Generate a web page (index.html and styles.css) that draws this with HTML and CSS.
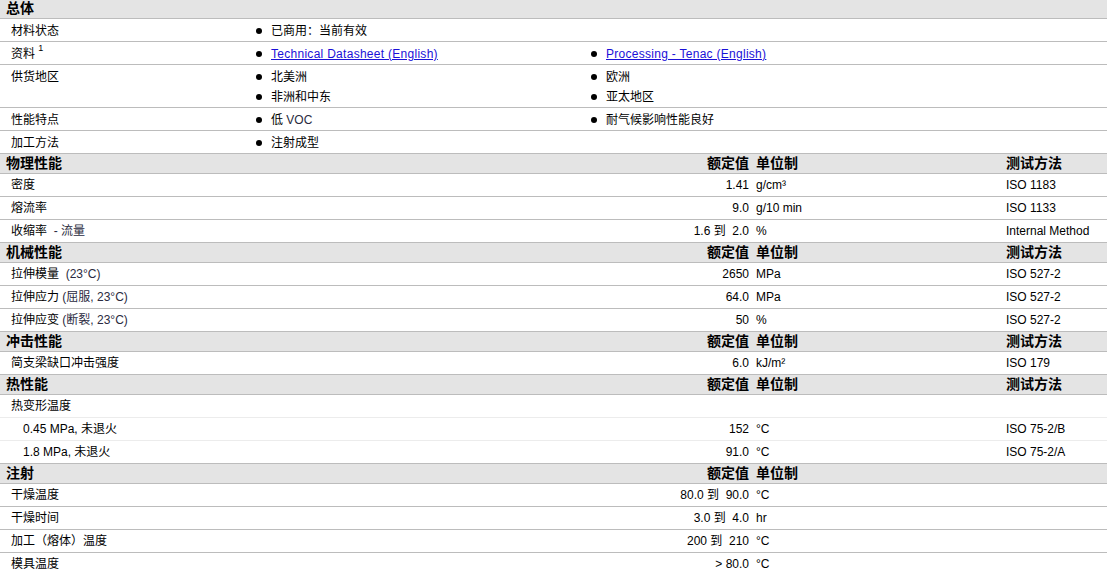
FILE: index.html
```html
<!DOCTYPE html>
<html lang="zh-CN">
<head>
<meta charset="utf-8">
<title>物性表</title>
<link rel="stylesheet" href="styles.css">
</head>
<body>
<div class="sheet">
  <div class="head"><div class="h-lbl">总体</div></div>
  <div class="grow">
    <div class="lbl">材料状态</div>
    <div class="col"><div class="item"><span class="dot"></span>已商用：当前有效</div></div>
    <div class="col"></div>
  </div>
  <div class="grow">
    <div class="lbl">资料 <sup class="note">1</sup></div>
    <div class="col"><div class="item"><span class="dot"></span><a href="#">Technical Datasheet (English)</a></div></div>
    <div class="col"><div class="item"><span class="dot"></span><a href="#">Processing - Tenac (English)</a></div></div>
  </div>
  <div class="grow">
    <div class="lbl">供货地区</div>
    <div class="col">
      <div class="item"><span class="dot"></span>北美洲</div>
      <div class="item"><span class="dot"></span>非洲和中东</div>
    </div>
    <div class="col">
      <div class="item"><span class="dot"></span>欧洲</div>
      <div class="item"><span class="dot"></span>亚太地区</div>
    </div>
  </div>
  <div class="grow">
    <div class="lbl">性能特点</div>
    <div class="col"><div class="item"><span class="dot"></span>低 <span class="dim">&nbsp;VOC</span></div></div>
    <div class="col"><div class="item"><span class="dot"></span>耐气候影响性能良好</div></div>
  </div>
  <div class="grow">
    <div class="lbl">加工方法</div>
    <div class="col"><div class="item"><span class="dot"></span>注射成型</div></div>
    <div class="col"></div>
  </div>

  <div class="head prow">
    <div class="h-lbl">物理性能</div><div class="val">额定值</div><div class="unit">单位制</div><div class="meth">测试方法</div>
  </div>
  <div class="prow row">
    <div class="lbl">密度</div><div class="val">1.41</div><div class="unit">g/cm³</div><div class="meth">ISO 1183</div>
  </div>
  <div class="prow row">
    <div class="lbl">熔流率</div><div class="val">9.0</div><div class="unit">g/10 min</div><div class="meth">ISO 1133</div>
  </div>
  <div class="prow row">
    <div class="lbl">收缩率 <span class="dim">&nbsp;- 流量</span></div><div class="val">1.6 到&nbsp; 2.0</div><div class="unit">%</div><div class="meth">Internal Method</div>
  </div>

  <div class="head prow">
    <div class="h-lbl">机械性能</div><div class="val">额定值</div><div class="unit">单位制</div><div class="meth">测试方法</div>
  </div>
  <div class="prow row">
    <div class="lbl">拉伸模量 <span class="dim">&nbsp;(23°C)</span></div><div class="val">2650</div><div class="unit">MPa</div><div class="meth">ISO 527-2</div>
  </div>
  <div class="prow row">
    <div class="lbl">拉伸应力 <span class="dim">(屈服, 23°C)</span></div><div class="val">64.0</div><div class="unit">MPa</div><div class="meth">ISO 527-2</div>
  </div>
  <div class="prow row">
    <div class="lbl">拉伸应变 <span class="dim">(断裂, 23°C)</span></div><div class="val">50</div><div class="unit">%</div><div class="meth">ISO 527-2</div>
  </div>

  <div class="head prow">
    <div class="h-lbl">冲击性能</div><div class="val">额定值</div><div class="unit">单位制</div><div class="meth">测试方法</div>
  </div>
  <div class="prow row">
    <div class="lbl">简支梁缺口冲击强度</div><div class="val">6.0</div><div class="unit">kJ/m²</div><div class="meth">ISO 179</div>
  </div>

  <div class="head prow">
    <div class="h-lbl">热性能</div><div class="val">额定值</div><div class="unit">单位制</div><div class="meth">测试方法</div>
  </div>
  <div class="prow row light">
    <div class="lbl">热变形温度</div><div class="val"></div><div class="unit"></div><div class="meth"></div>
  </div>
  <div class="prow row light">
    <div class="lbl sub">0.45 MPa, 未退火</div><div class="val">152</div><div class="unit">°C</div><div class="meth">ISO 75-2/B</div>
  </div>
  <div class="prow row">
    <div class="lbl sub">1.8 MPa, 未退火</div><div class="val">91.0</div><div class="unit">°C</div><div class="meth">ISO 75-2/A</div>
  </div>

  <div class="head prow">
    <div class="h-lbl">注射</div><div class="val">额定值</div><div class="unit">单位制</div><div class="meth"></div>
  </div>
  <div class="prow row">
    <div class="lbl">干燥温度</div><div class="val">80.0 到&nbsp; 90.0</div><div class="unit">°C</div><div class="meth"></div>
  </div>
  <div class="prow row">
    <div class="lbl">干燥时间</div><div class="val">3.0 到&nbsp; 4.0</div><div class="unit">hr</div><div class="meth"></div>
  </div>
  <div class="prow row">
    <div class="lbl">加工（熔体）温度</div><div class="val">200 到&nbsp; 210</div><div class="unit">°C</div><div class="meth"></div>
  </div>
  <div class="prow row">
    <div class="lbl">模具温度</div><div class="val">&gt; 80.0</div><div class="unit">°C</div><div class="meth"></div>
  </div>
</div>
</body>
</html>
```

FILE: styles.css
```css
html, body {
  margin: 0;
  padding: 0;
  background: #ffffff;
}

body {
  font-family: "Liberation Sans", "Noto Sans CJK SC", sans-serif;
  font-size: 12px;
  color: #000000;
}

.sheet {
  margin-top: -1px;
  width: 1107px;
}

.head {
  background: #e4e4e4;
  border-bottom: 1px solid #bcbcbc;
  height: 19px;
  line-height: 19px;
  font-weight: bold;
  font-size: 14px;
}

.head .h-lbl {
  padding-left: 6px;
}

.grow {
  display: grid;
  grid-template-columns: 256px 335px 1fr;
  border-bottom: 1px solid #bcbcbc;
  padding: 2px 0 0;
  line-height: 20px;
}

.lbl {
  padding-left: 11px;
  white-space: nowrap;
}

.lbl.sub {
  padding-left: 23px;
}

.note {
  font-size: 9px;
  vertical-align: top;
  line-height: 12px;
  position: relative;
  top: -2px;
}

.item {
  display: flex;
  align-items: center;
  height: 20px;
}

.dot {
  width: 6px;
  height: 6px;
  border-radius: 50%;
  background: #000000;
  margin-right: 9px;
  flex: none;
}

a {
  color: #1a10d8;
  text-decoration: underline;
  letter-spacing: 0.28px;
}

.dim {
  color: #2a2a40;
}

.prow {
  display: grid;
  grid-template-columns: 650px 100px 256px 1fr;
}

.row {
  border-bottom: 1px solid #bcbcbc;
  height: 22px;
  line-height: 22px;
}

.row.light {
  border-bottom-color: #ececec;
}

.val {
  text-align: right;
  padding-right: 1px;
  white-space: nowrap;
}

.unit {
  padding-left: 6px;
  white-space: nowrap;
}

.meth {
  white-space: nowrap;
}
```
